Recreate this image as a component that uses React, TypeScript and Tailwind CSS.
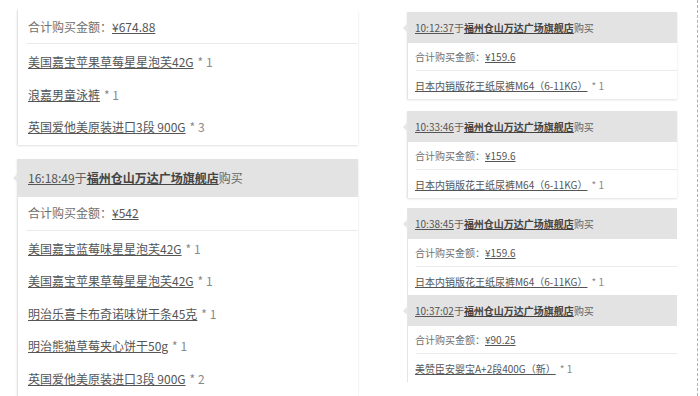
const SHOP = "福州仓山万达广场旗舰店";

type Item = { name: string; qty: number };
type Order = { time?: string; total: string; items: Item[] };

const leftOrders: Order[] = [
  {
    total: "¥674.88",
    items: [
      { name: "美国嘉宝苹果草莓星星泡芙42G", qty: 1 },
      { name: "浪嘉男童泳裤", qty: 1 },
      { name: "英国爱他美原装进口3段 900G", qty: 3 },
    ],
  },
  {
    time: "16:18:49",
    total: "¥542",
    items: [
      { name: "美国嘉宝蓝莓味星星泡芙42G", qty: 1 },
      { name: "美国嘉宝苹果草莓星星泡芙42G", qty: 1 },
      { name: "明治乐喜卡布奇诺味饼干条45克", qty: 1 },
      { name: "明治熊猫草莓夹心饼干50g", qty: 1 },
      { name: "英国爱他美原装进口3段 900G", qty: 2 },
    ],
  },
];

const rightOrders: Order[] = [
  { time: "10:12:37", total: "¥159.6", items: [{ name: "日本内销版花王纸尿裤M64（6-11KG）", qty: 1 }] },
  { time: "10:33:46", total: "¥159.6", items: [{ name: "日本内销版花王纸尿裤M64（6-11KG）", qty: 1 }] },
];

const rightPair: Order[] = [
  { time: "10:38:45", total: "¥159.6", items: [{ name: "日本内销版花王纸尿裤M64（6-11KG）", qty: 1 }] },
  { time: "10:37:02", total: "¥90.25", items: [{ name: "美赞臣安婴宝A+2段400G（新）", qty: 1 }] },
];

function Header({ time, h, px }: { time: string; h: string; px: string }) {
  return (
    <div className={`relative flex items-center bg-[#e3e3e3] ${h} ${px}`}>
      <span className="absolute -left-[5px] top-1/2 -translate-y-1/2 h-0 w-0 border-y-[5px] border-y-transparent border-r-[5px] border-r-[#e6e6e6]" />
      <span className="underline text-[#555]">{time}</span>
      <span className="text-[#666]">于</span>
      <span className="font-bold underline text-[#444]">{SHOP}</span>
      <span className="text-[#666]">购买</span>
    </div>
  );
}

function Body({ order, totalH, rowH, px, itemsPad }: { order: Order; totalH: string; rowH: string; px: string; itemsPad: string }) {
  return (
    <>
      <div className={`flex items-center ${totalH} ${px} text-[#707070]`}>
        合计购买金额：<span className="underline text-[#555]">{order.total}</span>
      </div>
      <div className="ml-[8px] h-px bg-[#ebebeb]" />
      <div className={itemsPad}>
        {order.items.map((it, i) => (
          <div key={i} className={`flex items-center ${rowH} ${px}`}>
            <span className="underline text-[#555]">{it.name}</span>
            <span className="ml-1 text-[#888]">* {it.qty}</span>
          </div>
        ))}
      </div>
    </>
  );
}

export default function App() {
  return (
    <div
      className="relative flex h-[396px] w-[700px] overflow-hidden bg-white"
      style={{ fontFamily: '"Noto Sans CJK SC", "Noto Sans", sans-serif' }}
    >
      <div className="flex w-[358px] shrink-0 flex-col gap-[14px] pl-[17px] pt-[10px] text-[12px]">
        {leftOrders.map((o, i) => (
          <div key={i} className="border-l border-[#e4e4e4] bg-white shadow-[0_1px_2px_rgba(0,0,0,0.12)]">
            {o.time && <Header time={o.time} h="h-[38px]" px="px-[10px]" />}
            <Body order={o} totalH="h-[33px]" rowH="h-[32.5px]" px="px-[10px]" itemsPad="pt-[2px] pb-[1px]" />
          </div>
        ))}
      </div>

      <div className="ml-[49px] flex w-[270px] shrink-0 flex-col gap-[12px] pt-[12px] text-[10px]">
        {rightOrders.map((o, i) => (
          <div key={i} className="border-l border-[#e4e4e4] bg-white shadow-[0_1px_2px_rgba(0,0,0,0.12)]">
            <Header time={o.time!} h="h-[31px]" px="px-[7px]" />
            <Body order={o} totalH="h-[27px]" rowH="h-[28px]" px="px-[7px]" itemsPad="" />
          </div>
        ))}
        <div className="-mt-[2px] border-l border-[#e4e4e4] bg-white">
          {rightPair.map((o, i) => (
            <div key={i}>
              <Header time={o.time!} h="h-[31px]" px="px-[7px]" />
              <Body order={o} totalH="h-[27px]" rowH="h-[28px]" px="px-[7px]" itemsPad="" />
            </div>
          ))}
        </div>
      </div>

      <div className="ml-auto mr-[2px] h-full border-l border-dashed border-l-[#9ccc5a]" />
    </div>
  );
}
